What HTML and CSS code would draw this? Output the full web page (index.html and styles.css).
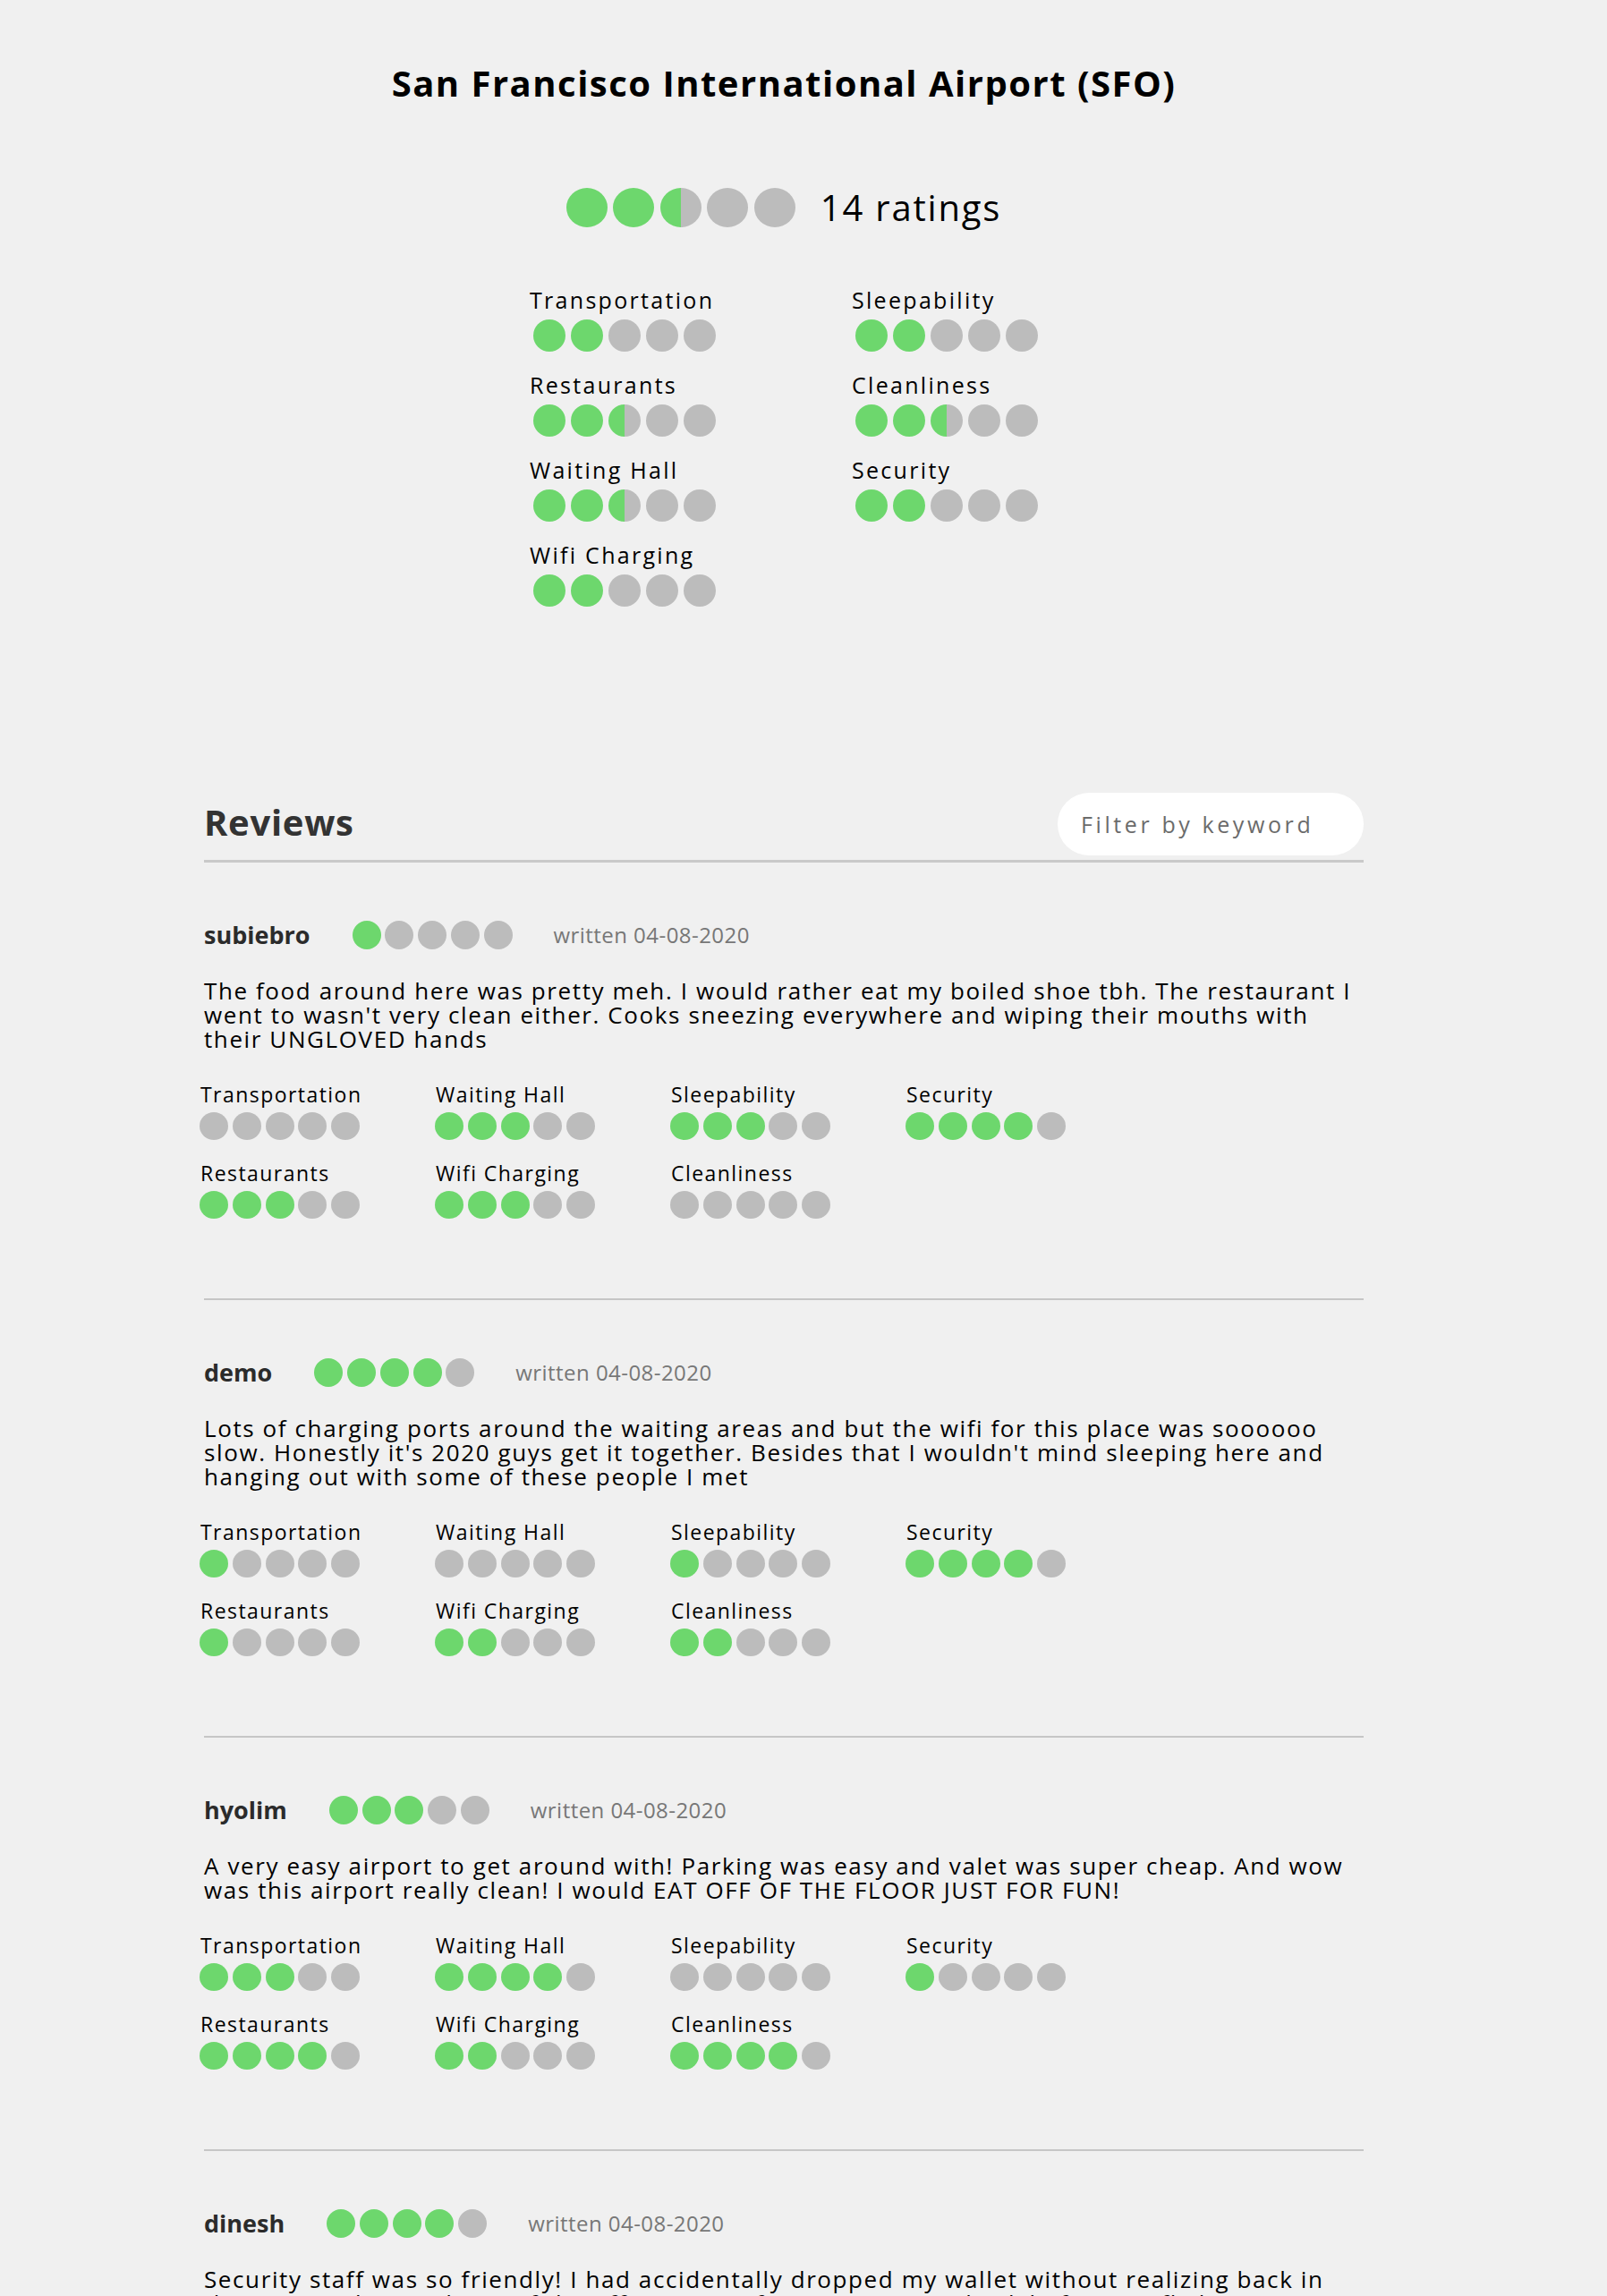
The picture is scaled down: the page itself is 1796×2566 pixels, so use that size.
FILE: index.html
```html
<!DOCTYPE html>
<html lang="en">
<head>
<meta charset="utf-8">
<title>San Francisco International Airport (SFO)</title>
<link rel="stylesheet" href="styles.css">
</head>
<body>
<div class="page">
  <header class="airport">
    <h1 class="airport-title">San Francisco International Airport (SFO)</h1>
    <div class="summary">
      <div class="dots dots-lg"><span class="dot on"></span><span class="dot on"></span><span class="dot half"></span><span class="dot"></span><span class="dot"></span></div>
      <span class="summary-count">14 ratings</span>
    </div>
    <div class="cat-grid">
      <div class="cat"><div class="cat-label">Transportation</div><div class="dots dots-md"><span class="dot on"></span><span class="dot on"></span><span class="dot"></span><span class="dot"></span><span class="dot"></span></div></div>
      <div class="cat"><div class="cat-label">Restaurants</div><div class="dots dots-md"><span class="dot on"></span><span class="dot on"></span><span class="dot half"></span><span class="dot"></span><span class="dot"></span></div></div>
      <div class="cat"><div class="cat-label">Waiting Hall</div><div class="dots dots-md"><span class="dot on"></span><span class="dot on"></span><span class="dot half"></span><span class="dot"></span><span class="dot"></span></div></div>
      <div class="cat"><div class="cat-label">Wifi Charging</div><div class="dots dots-md"><span class="dot on"></span><span class="dot on"></span><span class="dot"></span><span class="dot"></span><span class="dot"></span></div></div>
      <div class="cat"><div class="cat-label">Sleepability</div><div class="dots dots-md"><span class="dot on"></span><span class="dot on"></span><span class="dot"></span><span class="dot"></span><span class="dot"></span></div></div>
      <div class="cat"><div class="cat-label">Cleanliness</div><div class="dots dots-md"><span class="dot on"></span><span class="dot on"></span><span class="dot half"></span><span class="dot"></span><span class="dot"></span></div></div>
      <div class="cat"><div class="cat-label">Security</div><div class="dots dots-md"><span class="dot on"></span><span class="dot on"></span><span class="dot"></span><span class="dot"></span><span class="dot"></span></div></div>
    </div>
  </header>

  <section class="reviews">
    <div class="reviews-head">
      <h2 class="reviews-title">Reviews</h2>
      <input class="filter" type="text" placeholder="Filter by keyword">
    </div>

    <article class="review">
      <div class="review-head">
        <span class="review-name">subiebro</span>
        <div class="dots dots-sm"><span class="dot on"></span><span class="dot"></span><span class="dot"></span><span class="dot"></span><span class="dot"></span></div>
        <span class="review-date">written 04-08-2020</span>
      </div>
      <p class="review-text">The food around here was pretty meh. I would rather eat my boiled shoe tbh. The restaurant I went to wasn't very clean either. Cooks sneezing everywhere and wiping their mouths with their UNGLOVED hands</p>
      <div class="sub-grid">
        <div class="sub"><div class="sub-label">Transportation</div><div class="dots dots-xs"><span class="dot"></span><span class="dot"></span><span class="dot"></span><span class="dot"></span><span class="dot"></span></div></div>
        <div class="sub"><div class="sub-label">Restaurants</div><div class="dots dots-xs"><span class="dot on"></span><span class="dot on"></span><span class="dot on"></span><span class="dot"></span><span class="dot"></span></div></div>
        <div class="sub"><div class="sub-label">Waiting Hall</div><div class="dots dots-xs"><span class="dot on"></span><span class="dot on"></span><span class="dot on"></span><span class="dot"></span><span class="dot"></span></div></div>
        <div class="sub"><div class="sub-label">Wifi Charging</div><div class="dots dots-xs"><span class="dot on"></span><span class="dot on"></span><span class="dot on"></span><span class="dot"></span><span class="dot"></span></div></div>
        <div class="sub"><div class="sub-label">Sleepability</div><div class="dots dots-xs"><span class="dot on"></span><span class="dot on"></span><span class="dot on"></span><span class="dot"></span><span class="dot"></span></div></div>
        <div class="sub"><div class="sub-label">Cleanliness</div><div class="dots dots-xs"><span class="dot"></span><span class="dot"></span><span class="dot"></span><span class="dot"></span><span class="dot"></span></div></div>
        <div class="sub"><div class="sub-label">Security</div><div class="dots dots-xs"><span class="dot on"></span><span class="dot on"></span><span class="dot on"></span><span class="dot on"></span><span class="dot"></span></div></div>
      </div>
    </article>

    <article class="review">
      <div class="review-head">
        <span class="review-name">demo</span>
        <div class="dots dots-sm"><span class="dot on"></span><span class="dot on"></span><span class="dot on"></span><span class="dot on"></span><span class="dot"></span></div>
        <span class="review-date">written 04-08-2020</span>
      </div>
      <p class="review-text">Lots of charging ports around the waiting areas and but the wifi for this place was soooooo slow. Honestly it's 2020 guys get it together. Besides that I wouldn't mind sleeping here and hanging out with some of these people I met</p>
      <div class="sub-grid">
        <div class="sub"><div class="sub-label">Transportation</div><div class="dots dots-xs"><span class="dot on"></span><span class="dot"></span><span class="dot"></span><span class="dot"></span><span class="dot"></span></div></div>
        <div class="sub"><div class="sub-label">Restaurants</div><div class="dots dots-xs"><span class="dot on"></span><span class="dot"></span><span class="dot"></span><span class="dot"></span><span class="dot"></span></div></div>
        <div class="sub"><div class="sub-label">Waiting Hall</div><div class="dots dots-xs"><span class="dot"></span><span class="dot"></span><span class="dot"></span><span class="dot"></span><span class="dot"></span></div></div>
        <div class="sub"><div class="sub-label">Wifi Charging</div><div class="dots dots-xs"><span class="dot on"></span><span class="dot on"></span><span class="dot"></span><span class="dot"></span><span class="dot"></span></div></div>
        <div class="sub"><div class="sub-label">Sleepability</div><div class="dots dots-xs"><span class="dot on"></span><span class="dot"></span><span class="dot"></span><span class="dot"></span><span class="dot"></span></div></div>
        <div class="sub"><div class="sub-label">Cleanliness</div><div class="dots dots-xs"><span class="dot on"></span><span class="dot on"></span><span class="dot"></span><span class="dot"></span><span class="dot"></span></div></div>
        <div class="sub"><div class="sub-label">Security</div><div class="dots dots-xs"><span class="dot on"></span><span class="dot on"></span><span class="dot on"></span><span class="dot on"></span><span class="dot"></span></div></div>
      </div>
    </article>

    <article class="review">
      <div class="review-head">
        <span class="review-name">hyolim</span>
        <div class="dots dots-sm"><span class="dot on"></span><span class="dot on"></span><span class="dot on"></span><span class="dot"></span><span class="dot"></span></div>
        <span class="review-date">written 04-08-2020</span>
      </div>
      <p class="review-text">A very easy airport to get around with! Parking was easy and valet was super cheap. And wow was this airport really clean! I would EAT OFF OF THE FLOOR JUST FOR FUN!</p>
      <div class="sub-grid">
        <div class="sub"><div class="sub-label">Transportation</div><div class="dots dots-xs"><span class="dot on"></span><span class="dot on"></span><span class="dot on"></span><span class="dot"></span><span class="dot"></span></div></div>
        <div class="sub"><div class="sub-label">Restaurants</div><div class="dots dots-xs"><span class="dot on"></span><span class="dot on"></span><span class="dot on"></span><span class="dot on"></span><span class="dot"></span></div></div>
        <div class="sub"><div class="sub-label">Waiting Hall</div><div class="dots dots-xs"><span class="dot on"></span><span class="dot on"></span><span class="dot on"></span><span class="dot on"></span><span class="dot"></span></div></div>
        <div class="sub"><div class="sub-label">Wifi Charging</div><div class="dots dots-xs"><span class="dot on"></span><span class="dot on"></span><span class="dot"></span><span class="dot"></span><span class="dot"></span></div></div>
        <div class="sub"><div class="sub-label">Sleepability</div><div class="dots dots-xs"><span class="dot"></span><span class="dot"></span><span class="dot"></span><span class="dot"></span><span class="dot"></span></div></div>
        <div class="sub"><div class="sub-label">Cleanliness</div><div class="dots dots-xs"><span class="dot on"></span><span class="dot on"></span><span class="dot on"></span><span class="dot on"></span><span class="dot"></span></div></div>
        <div class="sub"><div class="sub-label">Security</div><div class="dots dots-xs"><span class="dot on"></span><span class="dot"></span><span class="dot"></span><span class="dot"></span><span class="dot"></span></div></div>
      </div>
    </article>

    <article class="review">
      <div class="review-head">
        <span class="review-name">dinesh</span>
        <div class="dots dots-sm"><span class="dot on"></span><span class="dot on"></span><span class="dot on"></span><span class="dot on"></span><span class="dot"></span></div>
        <span class="review-date">written 04-08-2020</span>
      </div>
      <p class="review-text">Security staff was so friendly! I had accidentally dropped my wallet without realizing back in the security line and one of the officers ran after me to give it back before my flight!</p>
      <div class="sub-grid">
        <div class="sub"><div class="sub-label">Transportation</div><div class="dots dots-xs"><span class="dot on"></span><span class="dot on"></span><span class="dot on"></span><span class="dot"></span><span class="dot"></span></div></div>
        <div class="sub"><div class="sub-label">Restaurants</div><div class="dots dots-xs"><span class="dot on"></span><span class="dot on"></span><span class="dot"></span><span class="dot"></span><span class="dot"></span></div></div>
        <div class="sub"><div class="sub-label">Waiting Hall</div><div class="dots dots-xs"><span class="dot on"></span><span class="dot on"></span><span class="dot on"></span><span class="dot"></span><span class="dot"></span></div></div>
        <div class="sub"><div class="sub-label">Wifi Charging</div><div class="dots dots-xs"><span class="dot on"></span><span class="dot on"></span><span class="dot"></span><span class="dot"></span><span class="dot"></span></div></div>
        <div class="sub"><div class="sub-label">Sleepability</div><div class="dots dots-xs"><span class="dot on"></span><span class="dot on"></span><span class="dot"></span><span class="dot"></span><span class="dot"></span></div></div>
        <div class="sub"><div class="sub-label">Cleanliness</div><div class="dots dots-xs"><span class="dot on"></span><span class="dot on"></span><span class="dot on"></span><span class="dot"></span><span class="dot"></span></div></div>
        <div class="sub"><div class="sub-label">Security</div><div class="dots dots-xs"><span class="dot on"></span><span class="dot on"></span><span class="dot on"></span><span class="dot on"></span><span class="dot on"></span></div></div>
      </div>
    </article>
  </section>
</div>
</body>
</html>
```

FILE: styles.css
```css
* { box-sizing: border-box; }

body {
  margin: 0;
  background: #f0f0f0;
  color: #000;
  font-family: "Open Sans", "Liberation Sans", sans-serif;
}

.page {
  width: 1296px;
  margin-left: 228px;
  padding-top: 66px;
}

/* ---------- airport summary ---------- */
.airport-title {
  margin: 0;
  text-align: center;
  font-size: 40px;
  font-weight: 700;
  line-height: 54px;
  letter-spacing: 1.5px;
}

.summary {
  display: flex;
  justify-content: center;
  align-items: center;
  gap: 28px;
  margin-top: 85px;
  height: 54px;
}

.summary-count {
  font-size: 40px;
  line-height: 54px;
  letter-spacing: 1.8px;
}

.dots { display: flex; }

.dot {
  display: block;
  border-radius: 50%;
  background: #bcbcbc;
  flex: none;
}
.dot.on { background: #6dd76d; }
.dot.half { background: linear-gradient(90deg, #6dd76d 50%, #bcbcbc 50%); }

.dots-lg { gap: 6.5px; }
.dots-lg .dot { width: 46px; height: 44px; }

.cat-grid {
  display: grid;
  grid-template-columns: 360px auto;
  grid-template-rows: repeat(4, auto);
  grid-auto-flow: column;
  justify-content: center;
  row-gap: 20px;
  margin-top: 59px;
}

.cat-label {
  font-size: 25px;
  line-height: 34px;
  letter-spacing: 2.3px;
}

.dots-md { gap: 6px; margin-top: 5px; margin-left: 4px; }
.dots-md .dot { width: 36px; height: 36px; }

/* ---------- reviews ---------- */
.reviews { margin-top: 208px; }

.reviews-head {
  display: flex;
  justify-content: space-between;
  align-items: center;
  padding-bottom: 5px;
  border-bottom: 3px solid #c9c9c9;
}

.reviews-title {
  margin: 0 0 5px;
  font-size: 40px;
  font-weight: 700;
  line-height: 54px;
  letter-spacing: 0.7px;
  color: #333;
}

.filter {
  width: 342px;
  height: 70px;
  border: none;
  border-radius: 35px;
  background: #fff;
  padding: 0 0 0 26px;
  font-family: "Open Sans", "Liberation Sans", sans-serif;
  font-size: 25px;
  letter-spacing: 3.6px;
  color: #6b6b6b;
  outline: none;
}
.filter::placeholder { color: #6b6b6b; }

.review {
  padding: 63px 0 89px;
  border-bottom: 2px solid #c6c6c6;
}

.review-head {
  display: flex;
  align-items: center;
  height: 36px;
}

.review-name {
  font-size: 27px;
  font-weight: 700;
  line-height: 36px;
  color: #2b2b2b;
}

.dots-sm { gap: 4.75px; margin-left: 47px; }
.dots-sm .dot { width: 32px; height: 32px; }

.review-date {
  margin-left: 46px;
  font-size: 24px;
  line-height: 36px;
  letter-spacing: 0.45px;
  color: #777;
}

.review-text {
  margin: 31px 0 0;
  font-size: 26px;
  line-height: 27px;
  letter-spacing: 1.6px;
}

.sub-grid {
  display: grid;
  grid-template-columns: repeat(4, 263px);
  grid-template-rows: auto auto;
  grid-auto-flow: column;
  row-gap: 22.3px;
  margin: 32.7px 0 0 -5px;
}

.sub-label {
  font-size: 23px;
  line-height: 30px;
  letter-spacing: 1.45px;
  padding-left: 1px;
}

.dots-xs { gap: 4.75px; margin-top: 5px; }
.dots-xs .dot { width: 32px; height: 31px; }
```
